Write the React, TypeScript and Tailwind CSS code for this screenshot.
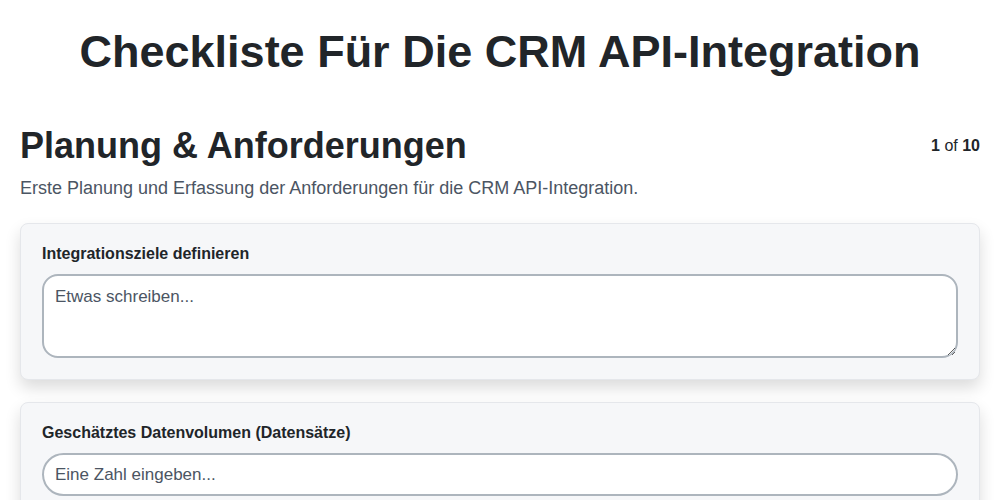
import React from 'react';

export default function App() {
  return (
    <div className="min-h-screen bg-white px-5 text-[#212529]" style={{ fontFamily: '"Liberation Sans", Arial, sans-serif' }}>
      <h1 className="pt-[24px] text-center text-[45px] font-bold leading-[56px]">
        Checkliste Für Die CRM API-Integration
      </h1>

      <div className="mt-[44px] flex items-start justify-between">
        <h2 className="text-[36px] font-bold leading-[44px]">Planung &amp; Anforderungen</h2>
        <div className="pt-[10px] text-[16px]">
          <span className="font-bold">1</span> of <span className="font-bold">10</span>
        </div>
      </div>
      <p className="mt-[7px] text-[18px] text-[#4b5563]">
        Erste Planung und Erfassung der Anforderungen für die CRM API-Integration.
      </p>

      <div className="mt-[21px] flex flex-col gap-[22px]">
        {/* Textarea field */}
        <div className="rounded-lg border border-[#e5e7eb] bg-[#f6f7f9] px-[21px] pt-[20px] pb-[21px] shadow-[0_8px_16px_rgba(0,0,0,0.14)]">
          <label className="block text-[16px] font-bold leading-[20px]">Integrationsziele definieren</label>
          <textarea
            className="mt-[10px] block h-[84px] w-full resize-y rounded-[16px] border-2 border-[#adb5bd] bg-white px-[11px] py-[8px] text-[17px] placeholder-[#4b5563] outline-none"
            placeholder="Etwas schreiben..."
          />
        </div>

        {/* Number field */}
        <div className="rounded-lg border border-[#e5e7eb] bg-[#f6f7f9] px-[21px] pt-[20px] pb-[21px] shadow-[0_8px_16px_rgba(0,0,0,0.14)]">
          <label className="block text-[16px] font-bold leading-[20px]">Geschätztes Datenvolumen (Datensätze)</label>
          <input
            type="text"
            className="mt-[10px] block h-[43px] w-full rounded-[22px] border-2 border-[#adb5bd] bg-white px-[11px] text-[17px] placeholder-[#4b5563] outline-none"
            placeholder="Eine Zahl eingeben..."
          />
        </div>
      </div>
    </div>
  );
}
